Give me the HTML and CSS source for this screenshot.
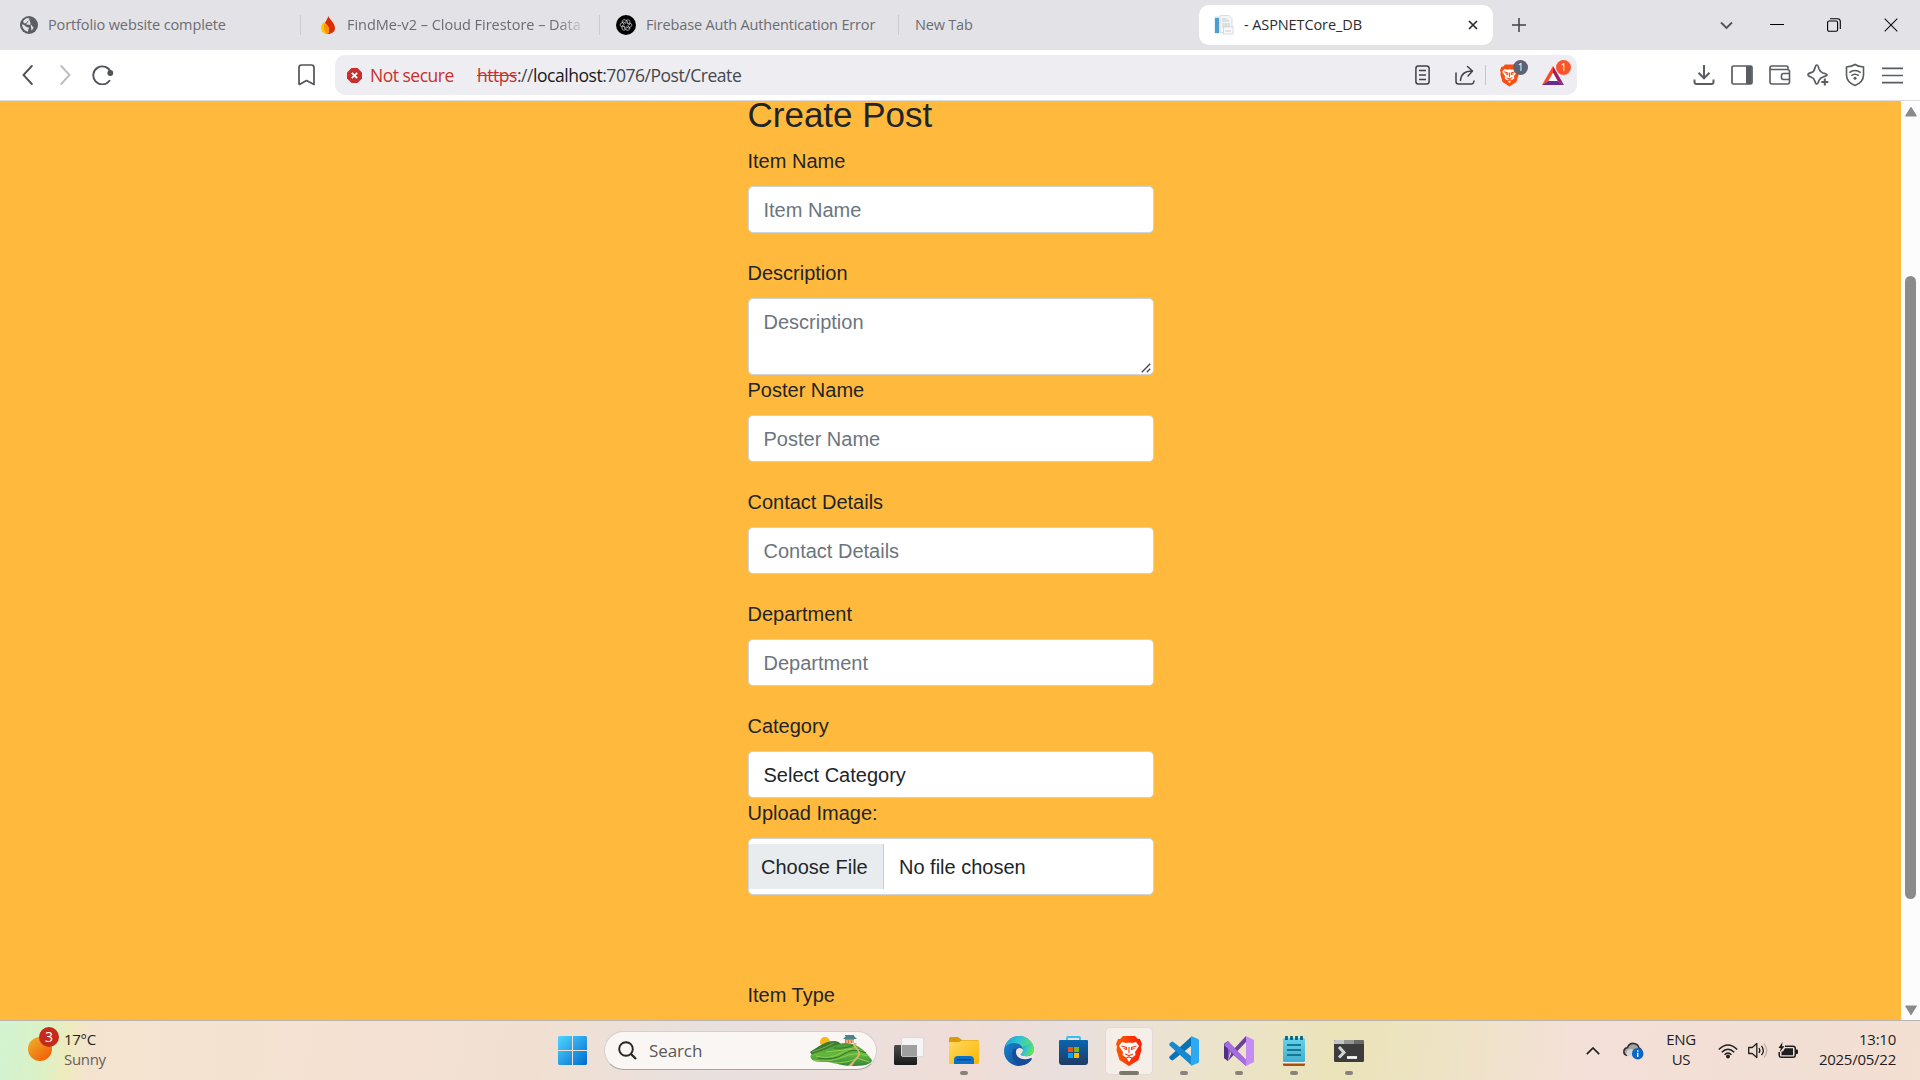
FILE: index.html
```html
<!DOCTYPE html>
<html lang="en">
<head>
<meta charset="utf-8">
<title>- ASPNETCore_DB</title>
<link rel="stylesheet" href="styles.css">
</head>
<body>
<div class="screen">
  <header class="tabs">
    <div class="tab tab-1">
      <svg width="18" height="18" viewBox="0 0 18 18"><circle cx="9" cy="9" r="9" fill="#5a5e63"/><path d="M9.500 1.800 C11 3.500 9.500 5 8.200 5.200 C7.500 5.500 8 7 6.800 7.200 C6 7.500 6.500 9 8 8.800 L10.500 8.800 C12.500 9 12 11 13.500 11.200 C13 13 12 14 11.500 14.500 M2 8.300 C4 8.800 5.500 9.500 6 10.800 L8.500 11.500 C9.500 12.500 8 13 8 15.800 C4.500 15 2 12 2 8.300Z" fill="#e3e2e7"/><path d="M3 6 C4 3.500 6 2 8.500 2 L9.500 4.200 C8 4.800 7 5 7 6.200 L4.800 7.500Z" fill="#e3e2e7"/></svg>
      <span class="tab-title t1">Portfolio website complete</span>
    </div>
    <div class="tab tab-2">
      <svg width="14" height="18" viewBox="0 0 14 18"><path d="M7.500 0 C8 3 14 7 14 12 C14 15.500 11 18 7 18 C4 18 2 16 2.500 12 C3 7 6 4 7.500 0Z" fill="#dd2c00"/><path d="M2.600 6 C4 7 8 10 8 13.500 C8 15.500 7.500 17 6.800 18 C2.500 18 0 15 0 12 C0 9.500 1.200 7.500 2.600 6Z" fill="#ffc400"/><path d="M3.300 8 C6 9.500 8 11 8 13.500 C8 15.500 7.500 17 6.800 18 C4 17 2.300 12 3.300 8Z" fill="#ff9100"/></svg>
      <span class="tab-title t2">FindMe-v2 – Cloud Firestore – Data</span>
    </div>
    <div class="tab tab-3">
      <svg width="20" height="20" viewBox="0 0 20 20"><circle cx="10" cy="10" r="10" fill="#000"/><g fill="none" stroke="#d8d8d8" stroke-width=".9" transform="translate(2.200 2.200) scale(.78)"><g id="petal"><path d="M10 7.300 L10 5.300 a2.600 2.600 0 0 1 5.100 .4 v3.300 l-3.200 1.900"/></g><use href="#petal" transform="rotate(60 10 10)"/><use href="#petal" transform="rotate(120 10 10)"/><use href="#petal" transform="rotate(180 10 10)"/><use href="#petal" transform="rotate(240 10 10)"/><use href="#petal" transform="rotate(300 10 10)"/></g></svg>
      <span class="tab-title t3">Firebase Auth Authentication Error</span>
    </div>
    <div class="tab tab-4"><span class="tab-title t4">New Tab</span></div>
    <div class="tab tab-active">
      <svg width="20" height="20" viewBox="0 0 20 20"><rect x=".5" y="1.500" width="5" height="17" fill="#d4e3ee"/><rect x="1" y="3" width="4" height="15" fill="#4b9fd0"/><path d="M6 .5h9l3 3v14H6z" fill="#f4f5f6" stroke="#d3d7da" stroke-width=".8"/><path d="M8 4h5M8 6h7M8 9h8M8 11h8" stroke="#c4cbd0"/><rect x="9.500" y="12" width="9.500" height="7" fill="#fafafa" stroke="#cfd3d6" stroke-width=".8"/><path d="M11 16h6" stroke="#b9cfdf"/></svg>
      <span class="tab-title t5">- ASPNETCore_DB</span>
      <svg class="tab-close" width="10" height="10" viewBox="0 0 10 10"><path d="M1 1l8 8M9 1l-8 8" stroke="#2b2c30" stroke-width="1.700"/></svg>
    </div>
    <div class="new-tab"><svg width="14" height="14" viewBox="0 0 14 14"><path d="M7 0v14M0 7h14" stroke="#404246" stroke-width="1.500"/></svg></div>
    <div class="window-controls">
      <svg class="tab-search" width="13" height="9" viewBox="0 0 13 9"><path d="M1 1.500l5.500 5.500L12 1.500" fill="none" stroke="#505358" stroke-width="1.900"/></svg>
      <svg width="14" height="14" viewBox="0 0 14 14"><path d="M0 6.500h14" stroke="#000" stroke-width="1"/></svg>
      <svg width="14" height="14" viewBox="0 0 14 14"><rect x=".6" y="3" width="10" height="10.200" rx="1.500" fill="none" stroke="#000" stroke-width="1.100"/><path d="M3 .7h7.500q2.800 0 2.800 2.800V11" fill="none" stroke="#000" stroke-width="1.100"/></svg>
      <svg width="14" height="14" viewBox="0 0 14 14"><path d="M.7 .7l12.600 12.600M13.300 .7L.7 13.300" stroke="#111" stroke-width="1.100"/></svg>
    </div>
  </header>

  <nav class="toolbar">
    <div class="nav-buttons">
      <svg width="11" height="20" viewBox="0 0 11 20"><path d="M9.800 1L1.500 10l8.300 9" fill="none" stroke="#505358" stroke-width="1.900" stroke-linecap="round"/></svg>
      <svg width="11" height="20" viewBox="0 0 11 20"><path d="M1.200 1l8.300 9-8.300 9" fill="none" stroke="#bdbec1" stroke-width="1.900" stroke-linecap="round"/></svg>
      <svg width="22" height="20" viewBox="0 0 22 20"><path d="M18.800 7.500A9 9 0 1 0 17.500 15.800" fill="none" stroke="#505358" stroke-width="1.900" stroke-linecap="round"/><circle cx="18.300" cy="8" r="2.900" fill="#505358"/></svg>
    </div>
    <svg class="bookmark" width="17" height="22" viewBox="0 0 17 22"><path d="M1 20V3.500Q1 1 3.500 1h10Q16 1 16 3.500V20.500L8.500 16.500 1.500 20.500z" fill="none" stroke="#505358" stroke-width="1.700" stroke-linejoin="round"/></svg>
    <div class="address">
      <svg class="danger" width="15" height="15" viewBox="0 0 15 15"><path d="M4.500 0h6L15 4.500v6L10.500 15h-6L0 10.500v-6z" fill="#c9302c"/><path d="M4.800 4.800l5.400 5.400M10.200 4.800l-5.400 5.400" stroke="#fff" stroke-width="1.800"/></svg>
      <span class="not-secure">Not secure</span>
      <span class="url"><s>https</s>://<b>localhost</b>:7076/Post/Create</span>
      <svg class="reader" width="15" height="20" viewBox="0 0 15 20"><rect x=".9" y=".9" width="13.200" height="18.200" rx="2.500" fill="none" stroke="#404247" stroke-width="1.500"/><path d="M4 5.500h7M4 10h7M4 14.500h7" stroke="#404247" stroke-width="1.400"/></svg>
      <svg class="share" width="20" height="20" viewBox="0 0 20 20"><path d="M1 8v8.500Q1 19 3.500 19h13q2 0 2.500-3M5.500 15.500C6 9 10 6 17 6M12.500 1.500L17.500 6l-4.500 5" fill="none" stroke="#404247" stroke-width="1.500" stroke-linecap="round" stroke-linejoin="round"/></svg>
      <span class="address-rule"></span>
      <span class="extension shields">
        <svg width="19" height="23" viewBox="0 0 26 30"><path d="M7 0h12l3 3 2 0 2 5-1 3 .5 3-3 10L13 30 3.500 24 .5 14 1 11 0 8 2 3h2z" fill="#fb4f12"/><path d="M6 6l4 1 3-.5L16 7l4-1 3 4-4 6 .5 3-4 3-2.500 4-2.500-4-4-3 .5-3-4-6z" fill="#fff"/><path d="M5.500 10l5 1.500v2l-3-1M20.500 10l-5 1.500v2l3-1M13 11v6M9 18l4 1.500 4-1.500M10 22l3-1 3 1" fill="none" stroke="#fb4f12" stroke-width="1.500"/></svg>
        <span class="badge badge-gray">1</span>
      </span>
      <span class="extension rewards">
        <svg width="22" height="19" viewBox="0 0 22 19"><path d="M11 0L0 19l6.500-4L11 7z" fill="#ff4724"/><path d="M11 0l11 19-6.500-4L11 7z" fill="#9e1f63"/><path d="M0 19h22l-6.500-4h-9z" fill="#662d91"/><path d="M11 7l4.500 8h-9z" fill="#fff"/></svg>
        <span class="badge badge-orange">1</span>
      </span>
    </div>
    <div class="tool-icons">
      <svg width="22" height="22" viewBox="0 0 22 22"><path d="M11 1v13M5.500 8.800L11 14.300l5.500-5.500M1.500 15.500V18q0 2 2 2h15q2 0 2-2v-2.500" fill="none" stroke="#595c61" stroke-width="2"/></svg>
      <svg width="22" height="22" viewBox="0 0 22 22"><rect x="1" y="2" width="20" height="18" rx="1.500" fill="none" stroke="#595c61" stroke-width="1.700"/><path d="M15 2h5.500v18H15z" fill="#595c61"/></svg>
      <svg width="22" height="22" viewBox="0 0 22 22"><path d="M19 5.500V3.500Q19 2 17 2H3Q1 2 1 4v14q0 2 2 2h15.500q2 0 2-2V7.500q0-2-2-2H3Q1 5.500 1 4M21 9.500h-6.500q-2 0-2 2v2q0 2 2 2H21" fill="none" stroke="#595c61" stroke-width="1.600"/></svg>
      <svg width="22" height="22" viewBox="0 0 22 22"><path d="M9.800 1Q11 1 12 5Q13 8 16 9Q20 10 20 11Q19.500 12 16 13Q13 14 12 16.500Q11 20 9.800 20Q8.600 20 7.800 17Q7 14 4 13Q1 12 1 10.700Q1 9.500 4 8.600Q7 8 7.800 4.500Q8.600 1 9.800 1z" fill="none" stroke="#595c61" stroke-width="1.700"/><path d="M17.800 14v8M13.800 18h8" stroke="#fff" stroke-width="4"/><path d="M17.800 14.500v7M14.300 18h7" stroke="#595c61" stroke-width="2"/></svg>
      <svg width="20" height="24" viewBox="0 0 20 24"><path d="M10 1.500Q13 3.500 18.500 4v8q0 7-8.500 10.500Q1.500 19 1.500 12V4Q7 3.500 10 1.500z" fill="none" stroke="#595c61" stroke-width="1.600"/><path d="M4.300 9.700q5.700-4.200 11.400 0M6.300 12.700q3.700-2.700 7.400 0" fill="none" stroke="#595c61" stroke-width="1.500"/><circle cx="10" cy="15.200" r="1.500" fill="#595c61"/></svg>
      <svg width="21" height="17" viewBox="0 0 21 17"><path d="M0 1.300h21M0 8.500h21M0 15.700h21" stroke="#595c61" stroke-width="1.700"/></svg>
    </div>
  </nav>

  <div class="viewport">
    <main class="page">
      <form class="post-form">
        <h2>Create Post</h2>
        <div class="field spaced"><label>Item Name</label><input class="control" placeholder="Item Name"></div>
        <div class="field area-field"><label>Description</label><textarea class="control area" placeholder="Description"></textarea><svg class="grip" width="10" height="10" viewBox="0 0 10 10"><path d="M.8 9.200l8.400-8.400M5.800 9.200l3.400-3.400" stroke="#4a4a4a" stroke-width="1.400"/></svg></div>
        <div class="field spaced"><label>Poster Name</label><input class="control" placeholder="Poster Name"></div>
        <div class="field spaced"><label>Contact Details</label><input class="control" placeholder="Contact Details"></div>
        <div class="field spaced"><label>Department</label><input class="control" placeholder="Department"></div>
        <div class="field"><label>Category</label><div class="control select">Select Category</div></div>
        <div class="field upload"><label>Upload Image:</label><div class="control file"><span class="file-button">Choose File</span><span class="file-name">No file chosen</span></div></div>
        <div class="field"><label>Item Type</label></div>
      </form>
    </main>
    <div class="scrollbar">
      <svg width="12" height="10" viewBox="0 0 12 10"><path d="M6 .8L11 8.800H1z" fill="#8b8b8b" stroke="#8b8b8b" stroke-width="1.600" stroke-linejoin="round"/></svg>
      <span class="thumb"></span>
      <svg width="12" height="10" viewBox="0 0 12 10"><path d="M6 9.200L11 1.200H1z" fill="#8b8b8b" stroke="#8b8b8b" stroke-width="1.600" stroke-linejoin="round"/></svg>
    </div>
  </div>

  <footer class="taskbar">
    <div class="weather">
      <span class="sun"><span class="count">3</span></span>
      <span class="weather-text"><span>17°C</span><span class="muted">Sunny</span></span>
    </div>
    <div class="apps">
      <span class="app start"><svg width="29" height="29" viewBox="0 0 29 29"><defs><linearGradient id="win" x1="0" y1="0" x2="29" y2="29" gradientUnits="userSpaceOnUse"><stop offset="0" stop-color="#50d5ff"/><stop offset="1" stop-color="#006bd0"/></linearGradient></defs><path d="M1 0h13v14H0V1zM15 0h13l1 1v13H15zM0 15h14v14H1l-1-1zM15 15h14v13l-1 1H15z" fill="url(#win)"/></svg></span>
      <div class="search">
        <svg width="19" height="19" viewBox="0 0 19 19"><circle cx="8" cy="8" r="6.800" fill="none" stroke="#262626" stroke-width="1.900"/><path d="M13 13l5 5" stroke="#262626" stroke-width="2.300"/></svg>
        <span class="search-label">Search</span>
        <svg width="62" height="32" viewBox="0 0 62 32"><defs><linearGradient id="hill" x1="0" y1="0" x2="0" y2="1"><stop offset="0" stop-color="#4d9438"/><stop offset=".5" stop-color="#63b83d"/><stop offset="1" stop-color="#35843b"/></linearGradient></defs><circle cx="15" cy="7" r="5" fill="#f9b615"/><path d="M0 17C8 12 15 6 24 6c6 0 9 5 13 9L22 25 2 20z" fill="#3c7933"/><path d="M2 17Q12 14 24 8M4 19Q17 15 29 10" fill="none" stroke="#6ba943" stroke-width="1.300"/><path d="M1 23c-2-3 2-4 6-5C19 14 26 8 36 8c12 0 20 9 26 17 0 5-10 6-21 6-9 0-14-3-23-4-9 0-16 0-17-4z" fill="url(#hill)"/><path d="M6 21q13 4 25-3t21-2M3 25q16 3 30-3t24-1M16 17q16-1 32-5M23 28q16 0 24-5l12 4" fill="none" stroke="#91cf50" stroke-width="1"/><path d="M8 23q16 3 26-4t22-1M24 13q12 1 19-3" fill="none" stroke="#2e762e" stroke-width="1"/><path d="M44 8q-2 3 2 6 5 4-1 10l-7 7h4q2-4 6-8 4-5 0-9-4-3-1-6z" fill="#dfb577"/><path d="M35 4h9v4h-9z" fill="#d8754b"/><path d="M33 4l3-3h8l3 3zM35 0h9v1h-9z" fill="#48868b"/><path d="M37 5v3M40 5v3M43 5v3" stroke="#ffe3b0"/></svg>
      </div>
      <span class="app taskview"><svg width="30" height="28" viewBox="0 0 30 28"><defs><linearGradient id="dark" x1="0" y1="0" x2="0" y2="1"><stop offset="0" stop-color="#4b4b4b"/><stop offset="1" stop-color="#191919"/></linearGradient></defs><rect y="8" width="23" height="20" rx="1.500" fill="url(#dark)"/><rect x="7.500" y=".5" width="22" height="19" rx="1.500" fill="#f5f5f5" stroke="#dadada"/><path d="M8 8h15v11.500H8z" fill="#9f9f9f"/></svg></span>
      <span class="app running"><svg width="30" height="27" viewBox="0 0 30 27"><defs><linearGradient id="folder" x1="0" y1="0" x2="1" y2="1"><stop offset="0" stop-color="#ffda61"/><stop offset="1" stop-color="#fab502"/></linearGradient></defs><path d="M0 7V2q0-2 2-2h7l4 3h15q2 0 2 2v5z" fill="#dc9b05"/><path d="M0 6q0-1 1-1h9l3-1.500h15.500q1.500 0 1.500 1.500V25.500q0 1.500-1.500 1.500h-27Q0 27 0 25.500z" fill="url(#folder)"/><path d="M5 27v-4q0-4 4-4h12q4 0 4 4v4z" fill="#0871cc"/><path d="M8 22.700h14" stroke="#063f7e" stroke-width="1.200"/></svg></span>
      <span class="app"><svg width="30" height="30" viewBox="0 0 30 30"><defs><linearGradient id="e1" x1="0" y1="0" x2="1" y2=".5"><stop offset="0" stop-color="#139fd8"/><stop offset=".5" stop-color="#35c6cd"/><stop offset="1" stop-color="#65e84d"/></linearGradient><linearGradient id="e2" x1="0" y1="0" x2="1" y2="1"><stop offset="0" stop-color="#1989d5"/><stop offset="1" stop-color="#123f8d"/></linearGradient></defs><circle cx="15" cy="15" r="15" fill="url(#e2)"/><path d="M1 11C3 4 9 0 15 0c8 0 15 6 15 13 0 5-4 7-8 7-3 0-5-1-5-2 0-1 2-1 2-4 0-4-4-7-9-7-4 0-7 2-9 4z" fill="url(#e1)"/><path d="M9 14c-3 7 2 14 8 15 5 0 9-3 11-6-3 2-9 2-13-1-4-4-3-8-1-10-2 0-4 1-5 2z" fill="#164c9a"/><path d="M30 13c0 5-4 8-9 7-3 0-5-1-4-2 1-1 2-2 2-4-1-3-7-3-7 2 0 6 7 9 15 6l3 1q1-5 0-10z" fill="#f0e4e0"/><path d="M18 11q3 4-1 7c-1 1 1 2 5 2 4 0 8-2 8-7l-3-6z" fill="url(#e1)"/></svg></span>
      <span class="app"><svg width="29" height="29" viewBox="0 0 29 29"><defs><linearGradient id="store" x1="0" y1="0" x2="0" y2="1"><stop offset="0" stop-color="#0966b0"/><stop offset="1" stop-color="#203a63"/></linearGradient></defs><path d="M8 6V2q0-1 1-1h11q1 0 1 1v4" fill="none" stroke="#35bff2" stroke-width="1.800"/><path d="M0 5q0-1 1-1h27q1 0 1 1v21q0 3-3 3H3q-3 0-3-3z" fill="url(#store)"/><path d="M9 11h5v5H9z" fill="#f25022"/><path d="M15 11h5v5h-5z" fill="#7fba00"/><path d="M9 17h5v5H9z" fill="#00a4ef"/><path d="M15 17h5v5h-5z" fill="#ffb900"/></svg></span>
      <span class="app running active"><svg width="26" height="30" viewBox="0 0 26 30"><defs><linearGradient id="lion" x1="0" y1="0" x2="1" y2="0"><stop offset="0" stop-color="#ff5a00"/><stop offset="1" stop-color="#f91d08"/></linearGradient></defs><path d="M7 0h12l3 3 2 0 2 5-1 3 .5 3-3 10L13 30 3.500 24 .5 14 1 11 0 8 2 3h2z" fill="url(#lion)"/><path d="M6 6l4 1 3-.5L16 7l4-1 3 4-4 6 .5 3-4 3-2.500 4-2.500-4-4-3 .5-3-4-6z" fill="#fff"/><path d="M5.500 10l5 1.500v2l-3-1M20.500 10l-5 1.500v2l3-1M13 11v6M9 18l4 1.500 4-1.500M10 22l3-1 3 1" fill="none" stroke="#fb4116" stroke-width="1.200"/></svg></span>
      <span class="app running"><svg width="30" height="30" viewBox="0 0 30 30"><path d="M22 1L.8 20.300q-1.200 1.200 0 2.400l1.400 1.300q1 .8 2.200 0L22 10z" fill="#0871b6"/><path d="M22 29L.8 9.700Q-.4 8.500.8 7.300L2.200 6q1-.8 2.200 0L22 20z" fill="#1689d0"/><path d="M22 0l7 3q1 .5 1 1.500v21q0 1-1 1.500l-7 3z" fill="#2ba9f2"/></svg></span>
      <span class="app running"><svg width="30" height="30" viewBox="0 0 30 30"><path d="M0 8l4-3 18 19v6L6 16l-2 9-4-3z" fill="#8758bb"/><path d="M0 8l4-3v20l-4-3z" fill="#543180"/><path d="M4 25L22 6V0L8 15z" fill="#6a4099"/><path d="M4 5l18 19v6L0 9z" fill="#a66de0"/><path d="M22 0l8 4v22l-8 4z" fill="#c78cf4"/></svg></span>
      <span class="app running"><svg width="22" height="30" viewBox="0 0 22 30"><defs><linearGradient id="note" x1="0" y1="0" x2="0" y2="1"><stop offset="0" stop-color="#65d2ec"/><stop offset="1" stop-color="#43aed0"/></linearGradient></defs><path d="M0 25h22v3.500q0 1.500-1.500 1.500h-19Q0 30 0 28.500z" fill="#a94f0d"/><path d="M0 24h22v3.500H0z" fill="#f0eee7"/><rect y="2" width="22" height="24" rx="1.500" fill="url(#note)"/><path d="M4 9h14M4 14h14M4 19h14" stroke="#075f7b" stroke-width="1.700"/><path d="M3.500 0v4M8.500 0v4M13.500 0v4M18.500 0v4" stroke="#075f7b" stroke-width="2.700"/></svg></span>
      <span class="app running"><svg width="30" height="22" viewBox="0 0 30 22"><rect width="30" height="22" rx="1.500" fill="#3c3c3c"/><path d="M0 4V1.500Q0 0 1.500 0H10v4z" fill="#c4c4c4"/><path d="M10 0h10v4H10z" fill="#969696"/><path d="M20 0h8.500Q30 0 30 1.500V4H20z" fill="#696969"/><path d="M5 7l5 5.500-5 5" fill="none" stroke="#d4d4d4" stroke-width="3"/><path d="M13 17.500h10" stroke="#f5f5f5" stroke-width="2.800"/></svg></span>
    </div>
    <div class="tray">
      <svg class="chevron" width="14" height="8" viewBox="0 0 14 8"><path d="M.8 7.200L7 1l6.200 6.200" fill="none" stroke="#222" stroke-width="1.700"/></svg>
      <svg class="cloud" width="21" height="18" viewBox="0 0 21 18"><path d="M4 13.500C-1 12 .5 6 4.500 5.500 7-1 15 1 16 6c3 1 3 4 2 6" fill="#a3a3a3" stroke="#303030" stroke-width="1.500"/><path d="M3 12q1-5 5-5 4 0 4 6H4z" fill="#d5d5d5"/><circle cx="14.700" cy="11.700" r="5.800" fill="#0a68c5"/><path d="M14.700 10.800v4.200M14.700 8.200v1.500" stroke="#fff" stroke-width="1.400"/></svg>
      <span class="lang"><span>ENG</span><span>US</span></span>
      <svg class="wifi" width="20" height="16" viewBox="0 0 20 16"><path d="M.8 6.500Q10-2.500 19.200 6.500M3.800 9.300Q10 3 16.200 9.300M6.600 11.800Q10 8 13.400 11.800" fill="none" stroke="#1e1e1e" stroke-width="1.500"/><circle cx="10" cy="13.500" r="1.900" fill="#1e1e1e"/></svg>
      <svg class="volume" width="20" height="17" viewBox="0 0 20 17"><path d="M.7 5.500h3.500L8.800 1.500v14l-4.600-4H.7z" fill="none" stroke="#1e1e1e" stroke-width="1.300" stroke-linejoin="round"/><path d="M11 6q1.700 2.500 0 5M13.500 3.800q3.600 4.700 0 9.400" fill="none" stroke="#1e1e1e" stroke-width="1.300"/><path d="M16 1.500q5.500 7 0 14" fill="none" stroke="#b7aca6" stroke-width="1.200"/></svg>
      <svg class="battery" width="20" height="17" viewBox="0 0 20 17"><path d="M7 4.200h8q2.300 0 2.300 2.300v6.500q0 2.300-2.300 2.300H3.500q-2.300 0-2.300-2.300V10" fill="none" stroke="#1e1e1e" stroke-width="1.500"/><path d="M7 6.200h8v7H3.500V9.500H5zM18 7.500h1q1 0 1 1V11q0 1-1 1h-1zM4.500 0L.5 6h2.300L1.800 10 6.500 4.300H4z" fill="#1e1e1e"/></svg>
      <span class="clock"><span>13:10</span><span class="date">2025/05/22</span></span>
    </div>
  </footer>
</div>
</body>
</html>
```
FILE: styles.css
```css
* { box-sizing: border-box; }
body { margin: 0; font-family: "Open Sans", "Noto Sans", sans-serif; }
svg { display: block; flex: none; }
.screen { width: 1920px; height: 1080px; display: flex; flex-direction: column; overflow: hidden; background: #fff; }

/* Tab strip */
.tabs { height: 50px; flex: none; display: flex; align-items: center; background: #e3e2e7; }
.tab { display: flex; align-items: center; height: 20px; flex: none; color: #6b6d72; font-size: 14.500px; white-space: nowrap; }
.tab-1 { width: 301px; padding-left: 20px; gap: 10px; border-right: 1px solid #cccbd1; }
.tab-2 { width: 299px; padding-left: 20px; gap: 12px; border-right: 1px solid #cccbd1; }
.tab-3 { width: 299px; padding-left: 16px; gap: 10px; border-right: 1px solid #cccbd1; }
.tab-4 { width: 300px; padding-left: 16px; }
.tab-active { width: 294px; height: 40px; padding: 0 15px; gap: 10px; border-radius: 10px; background: #fff; color: #2b2c30; }
.tab-title { line-height: 20px; }
.t1 { letter-spacing: -0.120px; }
.t2 { width: 234px; overflow: hidden; letter-spacing: -0.030px; mask-image: linear-gradient(to right, #000 210px, transparent 240px); }
.t3 { letter-spacing: -0.160px; }
.t4 { letter-spacing: -0.200px; }
.t5 { letter-spacing: -0.100px; }
.tab-close { margin-left: auto; }
.new-tab { width: 52px; display: flex; justify-content: center; flex: none; }
.window-controls { flex: 1; display: flex; align-items: center; justify-content: flex-end; gap: 43px; padding-right: 22px; }
.tab-search { margin-right: -6px; }

/* Navigation toolbar */
.toolbar { height: 51px; flex: none; display: flex; align-items: center; border-bottom: 1px solid #dddce2; background: #fff; }
.nav-buttons { display: flex; align-items: center; padding-left: 22px; width: 298px; gap: 27px; }
.nav-buttons svg:last-child { margin-left: -6px; }
.bookmark { margin-right: 20px; }
.address { width: 1242px; height: 40px; display: flex; align-items: center; padding-left: 12px; border-radius: 10px; background: #eeedf2; font-size: 17.500px; line-height: 24px; white-space: nowrap; }
.danger { margin-right: 8px; }
.not-secure { width: 107px; padding-bottom: 1px; color: #c5322d; letter-spacing: -0.500px; }
.url { width: 938px; padding-bottom: 1px; color: #45474c; letter-spacing: -0.460px; }
.url s { color: #c5322d; }
.url b { font-weight: 400; color: #18191b; }
.share { margin-left: 25px; }
.address-rule { width: 1px; height: 20px; margin: 0 14px 0 10px; background: #c5c4ca; }
.extension { position: relative; }
.rewards { margin-left: 23px; }
.badge { position: absolute; width: 15px; height: 15px; border-radius: 8px; color: #fff; font-size: 10px; line-height: 15px; text-align: center; }
.badge-gray { left: 13px; top: -4px; background: #5f6272; }
.badge-orange { left: 14px; top: -6px; background: #fb542b; }
.tool-icons { flex: 1; display: flex; align-items: center; justify-content: flex-end; gap: 16px; padding-right: 17px; }
.tool-icons svg:not(:last-child) { margin-left: -1px; margin-right: 1px; }

/* Web page */
.viewport { height: 919px; flex: none; display: flex; overflow: hidden; }
.page { width: 1901px; background: #ffba3d; padding: 0 747px 0 748px; overflow: hidden; font: 20px/30px "Liberation Sans", Arial, sans-serif; color: #212529; }
.post-form { width: 406px; }
.post-form h2 { margin: 0 0 17px -0.500px; font-size: 35px; line-height: 28px; font-weight: 400; }
.field label { display: block; margin: 0 0 10px -0.500px; }
.spaced { margin-bottom: 25px; }
.control { display: block; width: 406px; height: 47px; padding: 8px 15px 7px 14.500px; border: 1px solid #ced4da; border-radius: 5px; background: #fff; color: #212529; font: inherit; outline: none; }
.control::placeholder { color: #6c757d; opacity: 1; }
.area-field { position: relative; }
.area { height: 77px; resize: none; overflow: hidden; }
.grip { position: absolute; right: 3px; bottom: 2px; }
.file { height: 57px; padding: 5px 0; display: flex; }
.file-button { width: 135px; height: 45px; padding-left: 12px; line-height: 47px; background: #e9ecef; border-right: 1px solid #c7cbd0; }
.file-name { padding-left: 15px; line-height: 47px; }
.upload { margin-bottom: 85px; }
.scrollbar { width: 19px; display: flex; flex-direction: column; padding: 6px 0 5px 4px; align-items: flex-start; justify-content: space-between; background: #fcfcfc; }
.thumb { width: 11px; height: 623px; margin-top: 53px; border-radius: 6px; background: #8b8b8b; }

/* Taskbar */
.taskbar { height: 60px; flex: none; display: flex; border-top: 1px solid #b9b4b2; background: linear-gradient(97deg, #d2f3d2 0, #dcf1c4 50px, #eeebbd 70px, #f4e4cf 92px, #f4e1d3 360px, #f1e0d2 540px, #e8e0df 710px, #efddd7 970px, #e9dfdd 1060px, #ece3cf 1180px, #ebe3b9 1330px, #eee3c5 1440px, #f4e0d8 1570px, #f1ded4 1780px, #f4dfd2 1920px); font-size: 15px; line-height: 20px; color: #1f1f1f; white-space: nowrap; }
.weather { width: 545px; padding: 8px 0 0 28px; display: flex; gap: 12px; }
.sun { position: relative; width: 24px; height: 24px; margin-top: 8px; border-radius: 50%; background: linear-gradient(140deg, #efb52d, #f16709 80%); }
.count { position: absolute; left: 11px; top: -10px; width: 20px; height: 20px; border-radius: 50%; background: #c42b1c; color: #fff; font-size: 14px; text-align: center; }
.weather-text, .lang, .clock { display: flex; flex-direction: column; }
.weather-text { letter-spacing: -0.300px; }
.muted { color: #66615b; }
.apps { width: 832px; display: flex; align-items: center; }
.app { position: relative; width: 55px; height: 48px; display: flex; align-items: center; justify-content: center; }
.start { margin-right: 4px; }
.search { width: 273px; height: 39px; margin-right: 4px; display: flex; align-items: center; padding: 0 4px 0 13px; border: 1px solid #d6cfca; border-bottom-color: #aaa4a0; border-radius: 20px; background: #faf6f4; }
.search-label { flex: 1; padding-left: 12px; font-size: 17px; letter-spacing: -0.100px; color: #5b5856; }
.running::after { content: ""; position: absolute; left: 24px; bottom: 0; width: 8px; height: 4px; border-radius: 2px; background: #89827c; }
.active { width: 48px; margin: 0 3px 0 4px; border: 1px solid #e3dad7; border-radius: 5px; background: #f5eee9; }
.active::after { left: 13px; bottom: -1px; width: 20px; background: #7a776b; }
.tray { flex: 1; display: flex; align-items: center; justify-content: flex-end; padding-right: 24px; }
.chevron { margin-right: 23px; }
.cloud { margin-right: 21px; }
.lang { width: 32px; align-items: center; margin: -3px 21px 0 0; letter-spacing: -0.300px; }
.wifi { margin-right: 10px; }
.volume { margin-right: 10px; }
.clock { width: 98px; margin-top: -3px; align-items: flex-end; letter-spacing: -0.250px; }
```
